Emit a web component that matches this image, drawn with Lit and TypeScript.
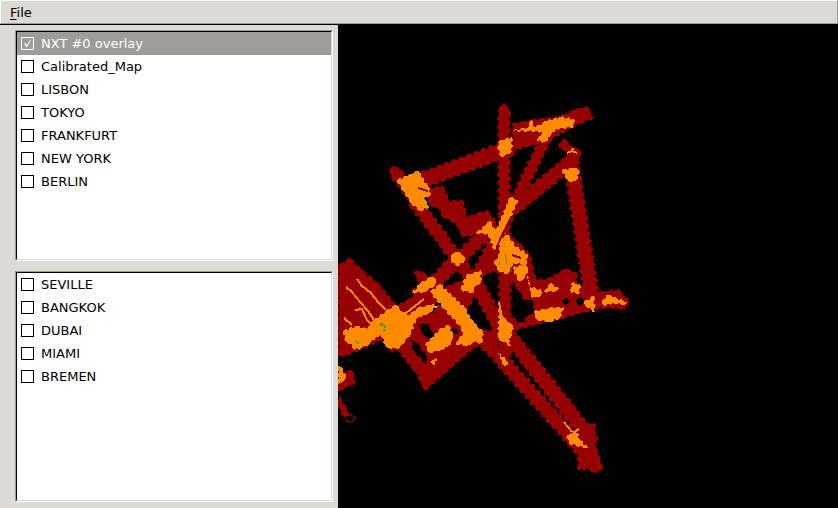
import { LitElement, html, svg, css } from "lit";
import { customElement, property } from "lit/decorators.js";

type Point = [number, number];

/** Parses "x,y x,y ..." into points. */
const parse = (s: string): Point[] =>
  s.trim().split(/\s+/).map((p) => p.split(",").map(Number) as Point);

function serrate(points: Point[], depth: number, pitch: number): string {
  const out: string[] = [];
  points.forEach(([x1, y1], i) => {
    const [x2, y2] = points[(i + 1) % points.length];
    const length = Math.hypot(x2 - x1, y2 - y1);
    const steps = Math.max(1, Math.round(length / pitch));
    const nx = (y2 - y1) / (length || 1);
    const ny = (x1 - x2) / (length || 1);
    for (let k = 0; k < steps; k++) {
      const d = k === 0 ? 0 : k % 2 ? depth : -depth;
      const t = k / steps;
      out.push(`${(x1 + (x2 - x1) * t + nx * d).toFixed(1)},${(y1 + (y2 - y1) * t + ny * d).toFixed(1)}`);
    }
  });
  return out.join(" ");
}

/** A straight run of the robot: a band of the given width. */
function band([x1, y1, x2, y2, w]: number[]): Point[] {
  const l = Math.hypot(x2 - x1, y2 - y1);
  const nx = ((y2 - y1) / l) * (w / 2);
  const ny = ((x1 - x2) / l) * (w / 2);
  return [[x1 + nx, y1 + ny], [x2 + nx, y2 + ny], [x2 - nx, y2 - ny], [x1 - nx, y1 - ny]];
}

const runs = [
  [504, 111, 505, 362, 12],
  [415, 183, 512, 147, 16],
  [547, 136, 494, 246, 11],
  [496, 238, 462, 308, 12],
  [573, 160, 514, 208, 14],
  [572, 168, 593, 305, 15],
  [396, 173, 420, 205, 12],
  [414, 201, 476, 284, 13],
  [470, 272, 507, 340, 14],
  [507, 333, 593, 442, 15],
  [478, 333, 582, 450, 14],
  [396, 325, 457, 259, 14],
  [448, 269, 496, 224, 13],
  [480, 345, 515, 322, 14],
];

const visited = [
  "498,112 499,107 504,104 507,106 510,113",
  "389,171 394,166 405,173 400,182",
  "512,124 530,120 560,116 574,110 587,106 594,118 575,126 548,141 512,151",
  "563,138 573,147 581,151 578,170 568,172 562,165 567,152 558,147",
  "425,190 443,185 450,202 462,199 468,217 487,210 496,222 484,232 463,238 456,223 445,219 437,208 430,205",
  "338,266 350,258 362,270 377,282 397,306 411,302 420,306 412,344 392,353 384,339 360,350 343,357 338,355",
  "413,272 421,271 428,277 440,284 462,309 483,333 483,344 474,348 425,391 415,372 397,350 405,332 397,306 418,294 411,291 420,284",
  "445,287 463,280 467,294 460,306 450,301",
  "504,232 520,243 530,255 536,280 545,280 565,269 577,272 577,287 590,290 606,292 618,289 629,301 625,309 600,308 560,319 514,330 512,320 536,312 531,299 523,300 514,286 494,270 484,276 478,268",
  "338,366 344,373 352,370 356,382 347,387 338,391",
  "338,395 350,413 344,417 338,407",
  "585,425 595,422 596,446 603,469 594,473 588,468 578,471 577,448",
];

const unexplored = [
  "438,301 445,296 451,301 444,303 436,307 431,314 428,309",
  "418,325 427,324 434,333 433,339 425,336",
  "410,340 417,343 427,357 426,364 415,352",
  "451,329 457,328 460,331 456,334",
  "525,323 526,317 535,313 531,308 516,310 517,322",
  "562,302 567,298 570,302 566,305",
  "576,299 580,297 584,301 579,306",
  "512,280 514,294 520,305 531,309 534,303 525,300 519,292",
];

const dense = [
  "397,180 407,176 418,171 428,187 431,194 424,199 430,207 420,211 411,203 403,191",
  "498,142 505,140 512,137 512,152 501,157 498,150",
  "513,131 529,127 531,120 535,127 547,121 560,117 574,119 574,127 556,129 545,142 537,141 542,132 528,131",
  "562,170 573,168 579,170 578,178 572,182 567,180",
  "476,233 486,225 490,221 496,231 510,197 518,200 507,226 503,236 494,250 488,234",
  "498,240 508,235 516,247 528,254 526,265 513,263 508,274 500,272 494,264 500,252",
  "512,268 525,264 528,270 525,278 519,281",
  "527,275 531,288 541,289 541,296 532,298",
  "544,292 551,283 554,287 559,288 556,291",
  "571,283 580,284 580,293 571,293",
  "584,302 594,296 595,312 588,308",
  "602,303 606,295 613,297 627,302 625,305 613,303 606,306",
  "533,312 549,308 564,307 560,318 550,322 537,320",
  "451,256 457,252 463,255 465,260 459,266 452,263",
  "461,290 466,275 473,274 481,270 481,282 474,288 473,293",
  "498,337 499,308 503,317 513,326 512,335 508,339 511,346 503,342",
  "498,353 506,360 508,365 504,366",
  "412,293 420,284 431,277 436,279 435,285 424,292",
  "430,292 440,284 465,308 474,323 483,332 482,343 473,342 467,346 455,344 463,333 459,325 444,309",
  "343,331 356,326 367,329 374,320 385,312 396,305 403,312 410,315 417,308 430,305 439,305 429,313 416,319 411,334 405,341 400,348 391,349 385,345 381,334 370,343 362,348 354,350 352,344 346,342",
  "425,345 439,330 449,325 453,335 451,345 441,350 429,353",
  "431,362 437,357 435,365",
  "338,366 341,367 346,377 342,382 338,384",
  "566,438 570,434 577,433 580,440 588,448 581,446 571,445",
];

const traces = [
  "M346,287 L352,292 L360,302 L368,311 L376,323",
  "M357,279 L362,286 L371,293 L378,302 L386,310",
  "M355,310 L362,309 L367,320 L372,325",
  "M344,318 L352,325",
  "M564,422 L572,432 M579,429 L573,433",
  "M567,153 L572,151 L577,153 M573,148 L572,151",
  "M401,317 L424,299",
  "M499,302 L502,318",
];

const northern = ["NXT #0 overlay", "Calibrated_Map", "LISBON", "TOKYO", "FRANKFURT", "NEW YORK", "BERLIN"];
const southern = ["SEVILLE", "BANGKOK", "DUBAI", "MIAMI", "BREMEN"];

@customElement("layer-list")
class LayerList extends LitElement {
  @property({ attribute: false }) layers: string[] = [];
  @property() active = "";

  static styles = css`
    :host {
      display: block;
      border: 1px solid;
      border-color: #9d9c95 #ffffff #ffffff #9d9c95;
    }
    .view {
      box-sizing: border-box;
      height: 100%;
      background: #ffffff;
      border: 1px solid;
      border-color: #000000 #dcdad5 #dcdad5 #000000;
    }
    .row {
      display: flex;
      align-items: center;
      gap: 7px;
      height: 23px;
      padding-left: 4px;
      color: #000000;
      white-space: nowrap;
    }
    .row.active {
      background: #9d9c95;
      color: #ffffff;
    }
    .box {
      appearance: none;
      flex: none;
      display: grid;
      place-items: center;
      box-sizing: border-box;
      width: 13px;
      height: 13px;
      margin: 0;
      border: 1px solid currentColor;
      color: inherit;
    }
    .box:checked::before {
      content: "";
      width: 7px;
      height: 7px;
      background: currentColor;
      clip-path: polygon(0 43%, 14% 40%, 36% 72%, 88% 0, 100% 0, 44% 100%, 29% 100%);
    }
  `;

  render() {
    return html`<div class="view">
      ${this.layers.map((name) => {
        const on = name === this.active;
        return html`<label class="row ${on ? "active" : ""}">
          <input class="box" type="checkbox" .checked=${on} />${name}
        </label>`;
      })}
    </div>`;
  }
}

@customElement("coverage-map")
class CoverageMap extends LitElement {
  static styles = css`
    :host { display: block; background: #000000; overflow: hidden; }
    .map { display: block; width: 100%; height: 100%; }
    .visited { fill: #960000; }
    .unexplored { fill: #000000; }
    .dense { fill: #ff8c00; }
    .trace { fill: none; stroke: #ff8c00; stroke-width: 2; }
    .gap { fill: none; stroke: #960000; stroke-width: 2; }
    .outline { fill: none; stroke: #960000; stroke-width: 1; }
    .goal { fill: #4c9a00; }
  `;

  render() {
    return html`<svg class="map" viewBox="338 25 500 483" preserveAspectRatio="xMinYMin meet"
      shape-rendering="crispEdges" role="img" aria-label="Coverage map">
      ${runs.map((r) => svg`<polygon class="visited" points=${serrate(band(r), 1.4, 4)} />`)}
      ${visited.map((p) => svg`<polygon class="visited" points=${serrate(parse(p), 1, 4)} />`)}
      ${unexplored.map((p) => svg`<polygon class="unexplored" points=${serrate(parse(p), 1, 4)} />`)}
      ${dense.map((p) => svg`<polygon class="dense" points=${serrate(parse(p), 1, 3)} />`)}
      ${traces.map((d) => svg`<path class="trace" d=${d} />`)}
      <path class="gap" d="M443,321 L455,325 L461,333 L455,343 L441,352 M418,188 L428,191 M497,246 L511,217 M512,255 L521,258" />
      <path class="outline" d="M350,414 L356,418 L350,423 L345,419 Z" />
      <path class="goal" d="M380,323h3v2h3v3h-2v-2h-4z M383,329h3v2h-3z M355,340h2v2h2v2h-2z M505,254h1v5h-1z M506,259h1v5h-1z M499,262h1v3h-1z M509,270h3v1h-3z" />
    </svg>`;
  }
}

@customElement("app-root")
class AppRoot extends LitElement {
  static styles = css`
    :host {
      display: flex;
      flex-direction: column;
      height: 100vh;
      background: #dcdad5;
      font: 13px/16px "DejaVu Sans", sans-serif;
      color: #000000;
    }
    .menubar {
      flex: none;
      box-sizing: border-box;
      height: 24px;
      border: 1px solid;
      border-color: #ffffff #9d9c95 #9d9c95 #ffffff;
      padding: 0 3px;
      display: flex;
      align-items: stretch;
    }
    .menu {
      border: 0;
      margin: 0;
      padding: 4px 6px 2px;
      background: none;
      font: inherit;
      color: inherit;
    }
    .key { text-decoration: underline; text-underline-offset: 2px; }
    .body {
      flex: 1;
      min-height: 0;
      display: grid;
      grid-template-columns: 338px 1fr;
      border-top: 1px solid #000000;
    }
    .side {
      display: grid;
      grid-template-rows: 1fr 1fr;
      gap: 10px;
      padding: 5px 5px 6px 15px;
    }
  `;

  render() {
    return html`
      <nav class="menubar"><button class="menu"><span class="key">F</span>ile</button></nav>
      <main class="body">
        <div class="side">
          <layer-list .layers=${northern} active="NXT #0 overlay"></layer-list>
          <layer-list .layers=${southern}></layer-list>
        </div>
        <coverage-map></coverage-map>
      </main>
    `;
  }
}
